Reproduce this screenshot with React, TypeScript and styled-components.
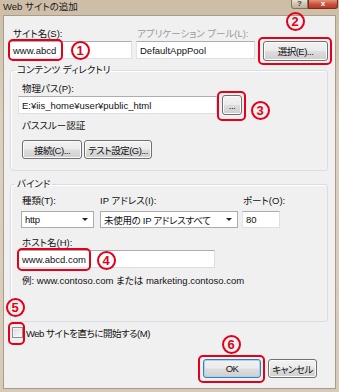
import React from "react";
import styled, { createGlobalStyle } from "styled-components";

const GlobalStyle = createGlobalStyle`
  html, body {
    margin: 0;
    padding: 0;
    background: #ffffff;
  }
`;

const Window = styled.div`
  position: relative;
  width: 339px;
  height: 392px;
  box-sizing: border-box;
  display: flex;
  flex-direction: column;
  padding: 0 3px 3px 3px;
  background: linear-gradient(180deg, #cdbda7 0%, #dcd0be 30%, #d7cab7 100%);
  font-family: "Liberation Sans", "Noto Sans CJK JP", sans-serif;
  font-size: 9.5px;
  font-feature-settings: "palt";
  color: #111;
  overflow: hidden;
`;

const TitleBar = styled.div`
  height: 15px;
  display: flex;
  align-items: flex-start;
  justify-content: space-between;
`;

const Title = styled.span`
  font-size: 9.5px;
  line-height: 13px;
  color: #1a1a1a;
`;

const CaptionButtons = styled.div`
  display: flex;
  margin-right: -2px;
`;

const CaptionButton = styled.div<{ $close?: boolean }>`
  width: ${p => (p.$close ? 30 : 17)}px;
  height: 9px;
  box-sizing: border-box;
  border: 1px solid ${p => (p.$close ? "#7d2a1f" : "#7f7565")};
  border-top: none;
  border-radius: ${p => (p.$close ? "0 0 3px 0" : "0 0 0 3px")};
  background: ${p =>
    p.$close
      ? "linear-gradient(180deg, #e0927f 0%, #c9503a 55%, #b73a24 100%)"
      : "linear-gradient(180deg, #e9e1d4 0%, #cfc2ae 55%, #bdae98 100%)"};
  color: ${p => (p.$close ? "#fff" : "#3a3a3a")};
  font-size: 8px;
  font-weight: bold;
  line-height: 8px;
  text-align: center;
`;

const Client = styled.div`
  flex: 1;
  border: 1px solid #a99c8a;
  background: #f0f0f0;
  padding: 11px 7px 0 5px;
  display: flex;
  flex-direction: column;
`;

const Row = styled.div`
  display: flex;
  align-items: flex-start;
`;

const Column = styled.div<{ $w: number; $ml?: number }>`
  width: ${p => p.$w}px;
  margin-left: ${p => p.$ml ?? 0}px;
  display: flex;
  flex-direction: column;
`;

const Label = styled.div<{ $indent?: number; $mt?: number; $disabled?: boolean }>`
  height: 13px;
  line-height: 13px;
  padding-left: ${p => p.$indent ?? 0}px;
  margin-top: ${p => p.$mt ?? 0}px;
  color: ${p => (p.$disabled ? "#9a9a9a" : "#111")};
  white-space: nowrap;
`;

const TextBox = styled.div<{ $w?: number; $h?: number; $mt?: number }>`
  width: ${p => (p.$w ? `${p.$w}px` : "auto")};
  height: ${p => p.$h ?? 18}px;
  margin-top: ${p => p.$mt ?? 0}px;
  box-sizing: border-box;
  border: 1px solid #dbdfe6;
  border-top-color: #abadb3;
  border-left-color: #e2e3ea;
  background: #ffffff;
  padding-left: 3px;
  display: flex;
  align-items: center;
  white-space: nowrap;
  overflow: hidden;
`;

const Select = styled(TextBox)`
  justify-content: space-between;
  padding-right: 5px;
  border-color: #acacac;
  letter-spacing: -0.3px;

  &::after {
    content: "";
    border-left: 3px solid transparent;
    border-right: 3px solid transparent;
    border-top: 3px solid #222;
  }
`;

const Button = styled.div<{ $w: number; $h?: number; $mt?: number; $default?: boolean }>`
  width: ${p => p.$w}px;
  height: ${p => p.$h ?? 19}px;
  margin-top: ${p => p.$mt ?? 0}px;
  box-sizing: border-box;
  border: 1px solid ${p => (p.$default ? "#3c7fb1" : "#707070")};
  border-radius: 3px;
  background: linear-gradient(180deg, #f2f2f2 0%, #ebebeb 48%, #dddddd 52%, #cfcfcf 100%);
  box-shadow: inset 0 0 0 1px ${p => (p.$default ? "#9fd6f5" : "#fbfbfb")};
  display: flex;
  align-items: center;
  justify-content: center;
  white-space: nowrap;
  letter-spacing: -0.5px;
`;

const Group = styled.fieldset<{ $mt: number; $pb: number }>`
  margin: ${p => p.$mt}px 0 0 1px;
  padding: 0 0 ${p => p.$pb}px 7px;
  border: 1px solid #d5dfe5;
  border-radius: 3px;
  box-shadow: inset 1px 1px 0 #ffffff;
  min-width: 0;
  display: flex;
  flex-direction: column;
`;

const Legend = styled.legend`
  margin-left: -3px;
  padding: 0 2px;
  line-height: 12px;
  font-size: 9.5px;
`;

const PathRow = styled.div`
  display: flex;
  align-items: center;
  gap: 5px;
`;

const ButtonRow = styled.div<{ $mt?: number; $pl?: number; $gap: number }>`
  display: flex;
  margin-top: ${p => p.$mt ?? 0}px;
  padding-left: ${p => p.$pl ?? 0}px;
  gap: ${p => p.$gap}px;
`;

const BindRow = styled.div`
  display: flex;
  margin-left: 3px;
  margin-top: 4px;
`;

const CheckRow = styled.div`
  display: flex;
  align-items: center;
  margin: 4px 0 0 3px;
  height: 13px;
  gap: 3px;
  letter-spacing: -0.5px;
`;

const CheckBox = styled.div`
  width: 11px;
  height: 11px;
  box-sizing: border-box;
  border: 1px solid #8f8f8f;
  background: linear-gradient(135deg, #dcdcdc 0%, #fbfbfb 100%);
  box-shadow: inset 0 0 0 1px #f4f4f4;
`;

const Footer = styled.div`
  display: flex;
  justify-content: flex-end;
  gap: 7px;
  margin-top: 20px;
  padding-right: 11px;
`;

const Mark = styled.div<{ $x: number; $y: number; $w: number; $h: number }>`
  position: absolute;
  left: ${p => p.$x}px;
  top: ${p => p.$y}px;
  width: ${p => p.$w}px;
  height: ${p => p.$h}px;
  box-sizing: border-box;
  border: 2px solid #e2001a;
  border-radius: 5px;
  pointer-events: none;
`;

const Badge = styled.div<{ $cx: number; $cy: number }>`
  position: absolute;
  left: ${p => p.$cx - 9.5}px;
  top: ${p => p.$cy - 9.5}px;
  width: 19px;
  height: 19px;
  box-sizing: border-box;
  border: 2px solid #e2001a;
  border-radius: 50%;
  color: #e2001a;
  font-family: "Liberation Sans", sans-serif;
  font-weight: bold;
  font-size: 13px;
  line-height: 15px;
  text-align: center;
`;

const marks = [
  { x: 8, y: 39, w: 55, h: 22 },
  { x: 258, y: 37, w: 74, h: 28 },
  { x: 217, y: 91, w: 29, h: 30 },
  { x: 17, y: 248, w: 74, h: 23 },
  { x: 8, y: 322, w: 17, h: 23 },
  { x: 198, y: 355, w: 67, h: 28 },
];

const badges = [
  { n: 1, cx: 80, cy: 50 },
  { n: 2, cx: 295, cy: 21 },
  { n: 3, cx: 260, cy: 110 },
  { n: 4, cx: 106, cy: 260 },
  { n: 5, cx: 15, cy: 307 },
  { n: 6, cx: 231, cy: 344 },
];

export default function App()
{
  return (
    <>
      <GlobalStyle />
      <Window>
        <TitleBar>
          <Title>Web サイトの追加</Title>
          <CaptionButtons>
            <CaptionButton>?</CaptionButton>
            <CaptionButton $close>x</CaptionButton>
          </CaptionButtons>
        </TitleBar>
        <Client>
          <Row>
            <Column $w={123}>
              <Label $indent={4}>サイト名(S):</Label>
              <TextBox $mt={1}>www.abcd</TextBox>
            </Column>
            <Column $w={119} $ml={4}>
              <Label $indent={1} $disabled>アプリケーション プール(L):</Label>
              <TextBox $mt={1}>DefaultAppPool</TextBox>
            </Column>
            <Column $w={65} $ml={8}>
              <Button $w={65} $h={20} $mt={14}>選択(E)...</Button>
            </Column>
          </Row>

          <Group $mt={3} $pb={11}>
            <Legend>コンテンツ ディレクトリ</Legend>
            <Label $indent={4} $mt={6}>物理パス(P):</Label>
            <PathRow>
              <TextBox $w={199}>E:¥iis_home¥user¥public_html</TextBox>
              <Button $w={20} $h={20}>...</Button>
            </PathRow>
            <Label $indent={4} $mt={4}>パススルー認証</Label>
            <ButtonRow $mt={8} $pl={4} $gap={2}>
              <Button $w={60}>接続(C)...</Button>
              <Button $w={68}>テスト設定(G)...</Button>
            </ButtonRow>
          </Group>

          <Group $mt={7} $pb={34}>
            <Legend>バインド</Legend>
            <BindRow>
              <Column $w={73}>
                <Label $indent={1}>種類(T):</Label>
                <Select $h={17} $mt={4}>http</Select>
              </Column>
              <Column $w={138} $ml={6}>
                <Label>IP アドレス(I):</Label>
                <Select $h={17} $mt={4}>未使用の IP アドレスすべて</Select>
              </Column>
              <Column $w={38} $ml={4}>
                <Label $indent={1}>ポート(O):</Label>
                <TextBox $h={17} $mt={4}>80</TextBox>
              </Column>
            </BindRow>
            <Label $indent={4} $mt={8}>ホスト名(H):</Label>
            <TextBox $w={197} $mt={1}>www.abcd.com</TextBox>
            <Label $indent={4} $mt={6}>例: www.contoso.com または marketing.contoso.com</Label>
          </Group>

          <CheckRow>
            <CheckBox />
            <span>Web サイトを直ちに開始する(M)</span>
          </CheckRow>

          <Footer>
            <Button $w={58} $default>OK</Button>
            <Button $w={49}>キャンセル</Button>
          </Footer>
        </Client>

        {marks.map((m, i) => (
          <Mark key={i} $x={m.x} $y={m.y} $w={m.w} $h={m.h} />
        ))}
        {badges.map(b => (
          <Badge key={b.n} $cx={b.cx} $cy={b.cy}>{b.n}</Badge>
        ))}
      </Window>
    </>
  );
}
